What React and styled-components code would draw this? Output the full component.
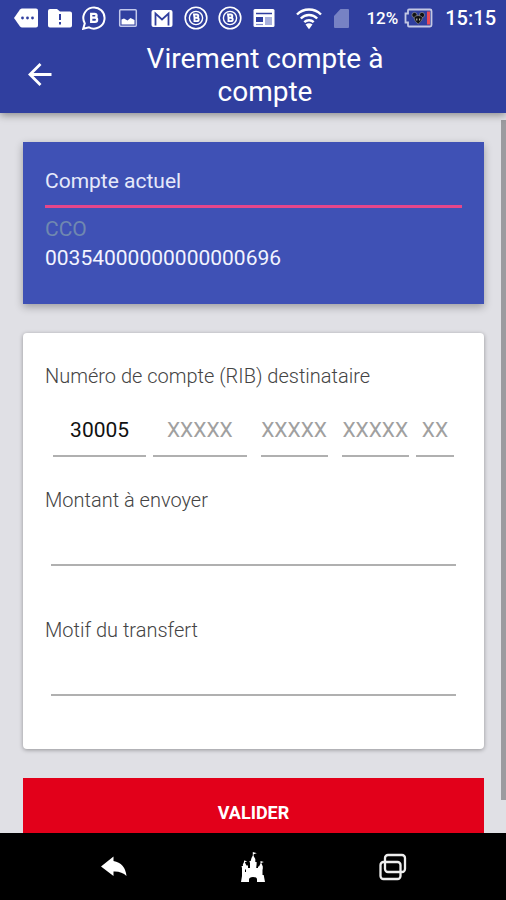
import React, { useState } from "react";
import styled, { createGlobalStyle } from "styled-components";

const GlobalStyle = createGlobalStyle`
  * {
    box-sizing: border-box;
  }
  body {
    margin: 0;
    font-family: Roboto, "Liberation Sans", sans-serif;
  }
`;

const MessageIcon = () => (
  <svg width="24" height="24" viewBox="0 0 24 24">
    <path d="M8 2.500h14q2 0 2 2v15q0 2-2 2H8q-1 0-2-1L0 12l6-8.500q1-1 2-1z" fill="#fff" />
    <g fill="#303f9f">
      <circle cx="8.5" cy="12" r="1.4" />
      <circle cx="13.5" cy="12" r="1.4" />
      <circle cx="18.5" cy="12" r="1.4" />
    </g>
  </svg>
);

const FolderAlertIcon = () => (
  <svg width="24" height="24" viewBox="0 0 24 24">
    <path d="M2 3h7l3 2.500h10q2 0 2 2v12q0 2-2 2H2q-2 0-2-2V5q0-2 2-2z" fill="#fff" />
    <path d="M12 8v6M12 16v2.4" stroke="#303f9f" strokeWidth="2" />
  </svg>
);

const BusinessChatIcon = () => (
  <svg width="24" height="24" viewBox="0 0 24 24" fill="none" stroke="#fff">
    <path d="M1.2 22.8l1.6-5.4A10.6 10.6 0 1 1 7 21.4z" strokeWidth="2" />
    <path
      d="M9.2 7.8h3.4a1.900 1.900 0 0 1 0 3.900H9.2zM9.2 11.7h3.800a2.100 2.100 0 0 1 0 4.200H9.2z"
      strokeWidth="2.300"
    />
  </svg>
);

const PhotoIcon = () => (
  <svg width="24" height="24" viewBox="0 0 24 24">
    <rect x="3.7" y="3.7" width="16.6" height="16.6" rx="1" fill="none" stroke="#c3c9ec" strokeWidth="1.5" />
    <path d="M5.500 18.500v-5l2.500-1 3.500 2 3-2.500 4 2v4.500z" fill="#fff" />
  </svg>
);

const MailIcon = () => (
  <svg width="24" height="24" viewBox="0 0 24 24">
    <rect x="1.500" y="4" width="21" height="17" rx="2" fill="#fff" />
    <path d="M5.500 19.500V7.500l6.500 6 6.500-6v12" fill="none" stroke="#303f9f" strokeWidth="1.800" />
  </svg>
);

const CoinIcon = () => (
  <svg width="24" height="24" viewBox="0 0 24 24" fill="none" stroke="#fff">
    <circle cx="12" cy="12" r="10.800" strokeWidth="1.600" />
    <circle cx="12" cy="12" r="6.600" strokeWidth="1.400" />
    <path d="M10 8.500h2.700a1.500 1.500 0 0 1 0 3.200H10.500zM10.500 11.700h2.500a1.700 1.700 0 0 1 0 3.400H10.500z" strokeWidth="1.900" />
  </svg>
);

const NewsIcon = () => (
  <svg width="24" height="24" viewBox="0 0 24 24">
    <rect x="1.500" y="3" width="21" height="18" rx="1.500" fill="#fff" />
    <path d="M4 7.500h16" stroke="#303f9f" strokeWidth="1.500" />
    <path d="M4 11h7v5H4z" fill="#303f9f" />
    <path d="M13 11h7v8h-7z" fill="#aab2dd" />
    <path d="M4 18.500h7" stroke="#7f8acb" strokeWidth="1.200" />
  </svg>
);

const WifiIcon = () => (
  <svg width="26" height="24" viewBox="0 0 26 24" fill="none" stroke="#fff" strokeWidth="2.400">
    <path d="M1 8.500a17 17 0 0 1 24 0" />
    <path d="M4.800 12.500a11.500 11.500 0 0 1 16.400 0" />
    <path d="M8.300 16.200a6.700 6.700 0 0 1 9.400 0" />
    <path d="M9.500 18.500q3.500-2.400 7 0L13 23.300z" fill="#fff" stroke="none" />
  </svg>
);

const SimIcon = () => (
  <svg width="16" height="24" viewBox="0 0 16 24">
    <path d="M6.500 3H14q1 0 1 1v17q0 1-1 1H1q-1 0-1-1V10z" fill="#7782c4" />
  </svg>
);

const BatteryIcon = () => (
  <svg width="30" height="24" viewBox="0 0 30 24">
    <path
      d="M6 3.500h21q1.500 0 1.500 1.500v14q0 1.500-1.500 1.500H6q-1 0-1-1v-3H2.500v-9H5v-3q0-1 1-1z"
      fill="none"
      stroke="#c3c8e4"
      strokeWidth="1.800"
    />
    <path d="M24 5.500h3v13h-3z" fill="#e84a56" />
    <g fill="#111" stroke="#8f8f96" strokeWidth=".7">
      <circle cx="11.500" cy="9" r="2.600" />
      <circle cx="19" cy="9" r="2.600" />
      <path d="M11 11.500q1.500-2 4.200-2t4.300 2q0 3.500-4.300 6.500-4.200-3-4.200-6.500z" />
    </g>
    <path d="M13.800 12.500v2M16.700 12.500v2" stroke="#d8d3c4" />
  </svg>
);

const ArrowIcon = () => (
  <svg width="32" height="32" viewBox="0 0 32 32" fill="none" stroke="#fff" strokeWidth="2.800">
    <path d="M27.500 15.500H6M16.500 5L6 15.500 16.500 26" />
  </svg>
);

const ReplyIcon = () => (
  <svg width="28" height="24" viewBox="0 0 28 24" fill="#fff">
    <path d="M2 11.500L14.500 1.500v4.500Q26 8 27.500 21q-5-5-13-4.500V21z" />
  </svg>
);

const CastleIcon = () => (
  <svg width="26" height="32" viewBox="0 0 26 32" fill="#fff">
    <path d="M1 31l1-6V17l-.5-2H3l-.2-1.500 1.200-2.500V9.500l3.200.8-2.400 1 1.700 3.200H8V17h2v-5l-.6-2h1.300l.8-3 1.300-2.500V1l4 1.200-3.200 1V5l1.700 3v3h1.300v2l-.4 4H18v-1.500h1l1.500-3V10l3.400 1-2.600 1 1.500 3.500v2L22.500 19v5h1.200l1.300 7h-8v-2.500q0-2.500-4-2.500t-4 2.500V31z" />
    <path d="M5.500 18.500v2.500" stroke="#000" />
  </svg>
);

const RecentsIcon = () => (
  <svg width="28" height="28" viewBox="0 0 28 28" fill="none" stroke="#eee" strokeWidth="2.300">
    <rect x="6" y="2" width="20" height="17" rx="3" />
    <rect x="1.500" y="9" width="20" height="17" rx="3" />
  </svg>
);

const ribFields = [
  { name: "banque", label: "Code banque", mask: "XXXXX" },
  { name: "agence", label: "Code agence", mask: "XXXXX" },
  { name: "compte1", label: "Compte, début", mask: "XXXXX", inset: true },
  { name: "compte2", label: "Compte, fin", mask: "XXXXX" },
  { name: "cle", label: "Clé RIB", mask: "XX" },
];

const App = () => {
  const [rib, setRib] = useState({ banque: "30005", agence: "", compte1: "", compte2: "", cle: "" });
  const [montant, setMontant] = useState("");
  const [motif, setMotif] = useState("");

  const handleRibChange = (e) => {
    setRib({ ...rib, [e.target.name]: e.target.value });
  };

  const handleSubmit = (e) => {
    e.preventDefault();
  };

  return (
    <Screen>
      <GlobalStyle />
      <TopBar>
        <StatusBar>
          <Notifications>
            <MessageIcon />
            <FolderAlertIcon />
            <BusinessChatIcon />
            <PhotoIcon />
            <MailIcon />
            <CoinIcon />
            <CoinIcon />
            <NewsIcon />
          </Notifications>
          <SystemStatus>
            <WifiIcon />
            <SimIcon />
            <Battery>
              <span>12%</span>
              <BatteryIcon />
            </Battery>
            <Clock>15:15</Clock>
          </SystemStatus>
        </StatusBar>
        <Header>
          <BackButton type="button" aria-label="Retour">
            <ArrowIcon />
          </BackButton>
          <Title>Virement compte à compte</Title>
        </Header>
      </TopBar>
      <Content>
        <AccountCard>
          <AccountTitle>Compte actuel</AccountTitle>
          <AccountType>CCO</AccountType>
          <AccountNumber>00354000000000000696</AccountNumber>
        </AccountCard>
        <Form onSubmit={handleSubmit}>
          <FormCard>
            <RibGroup>
              <Legend>Numéro de compte (RIB) destinataire</Legend>
              <RibRow>
                {ribFields.map((field) => (
                  <RibInput
                    key={field.name}
                    type="text"
                    name={field.name}
                    aria-label={field.label}
                    placeholder={field.mask}
                    maxLength={field.mask.length}
                    value={rib[field.name]}
                    onChange={handleRibChange}
                    $inset={field.inset}
                  />
                ))}
              </RibRow>
            </RibGroup>
            <Field>
              <Label htmlFor="montant">Montant à envoyer</Label>
              <TextInput id="montant" type="text" value={montant} onChange={(e) => setMontant(e.target.value)} />
            </Field>
            <Field>
              <Label htmlFor="motif">Motif du transfert</Label>
              <TextInput id="motif" type="text" value={motif} onChange={(e) => setMotif(e.target.value)} />
            </Field>
          </FormCard>
          <SubmitButton type="submit">VALIDER</SubmitButton>
        </Form>
        <ScrollThumb />
      </Content>
      <NavBar>
        <NavButton type="button" aria-label="Précédent">
          <ReplyIcon />
        </NavButton>
        <NavButton type="button" aria-label="Accueil">
          <CastleIcon />
        </NavButton>
        <NavButton type="button" aria-label="Applications récentes">
          <RecentsIcon />
        </NavButton>
      </NavBar>
    </Screen>
  );
};

const Screen = styled.div`
  display: flex;
  flex-direction: column;
  height: 100vh;
  background: #e0e0e5;
`;

const TopBar = styled.div`
  position: relative;
  z-index: 1;
  flex: none;
  background: #303f9f;
  color: #fff;
  box-shadow: 0 2px 8px rgba(0, 0, 0, 0.4);
`;

const StatusBar = styled.div`
  display: flex;
  align-items: center;
  justify-content: space-between;
  height: 35px;
  padding: 0 10px 0 14px;
`;

const Notifications = styled.div`
  display: flex;
  gap: 10px;
`;

const SystemStatus = styled.div`
  display: flex;
  align-items: center;
  gap: 12px;
`;

const Battery = styled.div`
  display: flex;
  align-items: center;
  gap: 5px;
  margin-left: 4px;
  font-size: 17px;
  font-weight: 500;
`;

const Clock = styled.time`
  font-size: 20px;
  font-weight: 500;
`;

const Header = styled.header`
  display: flex;
  align-items: center;
  padding: 7px 32px 5px 24px;
`;

const BackButton = styled.button`
  display: flex;
  padding: 0;
  border: none;
  background: none;
  color: #fff;
  cursor: pointer;
`;

const Title = styled.h1`
  max-width: 280px;
  margin: 0 auto;
  font-size: 28px;
  font-weight: 400;
  line-height: 33px;
  text-align: center;
`;

const Content = styled.main`
  position: relative;
  flex: 1;
  min-height: 0;
  overflow: hidden;
  padding: 29px 22px 0 23px;
`;

const AccountCard = styled.section`
  padding: 23px 22px 31px;
  background: #3f51b5;
  color: #fff;
  font-size: 21px;
  line-height: 29px;
  box-shadow: 0 3px 8px rgba(0, 0, 0, 0.3);
`;

const AccountTitle = styled.h2`
  margin: 0 0 7px;
  padding-bottom: 8px;
  border-bottom: 3px solid #e5468a;
  color: #e6e9fa;
  font-size: 21px;
  font-weight: 400;
  line-height: 32px;
`;

const AccountType = styled.div`
  color: #7088b0;
`;

const AccountNumber = styled.div`
  color: #f2f4ff;
`;

const Form = styled.form`
  display: flex;
  flex-direction: column;
  gap: 29px;
  margin-top: 29px;
`;

const FormCard = styled.div`
  padding: 28px 22px 53px;
  border-radius: 4px;
  background: #fff;
  box-shadow: 0 1px 4px rgba(0, 0, 0, 0.35);
`;

const RibGroup = styled.fieldset`
  margin: 0 0 28px;
  padding: 0;
  border: none;
`;

const Legend = styled.legend`
  padding: 0;
  color: #444;
  font-size: 20px;
  font-weight: 300;
  line-height: 30px;
`;

const RibRow = styled.div`
  display: grid;
  grid-template-columns: 93fr 93fr 81fr 67fr 38fr;
  gap: 7px;
  padding: 14px 8px 0;
`;

const Input = styled.input`
  width: 100%;
  min-width: 0;
  padding: 0;
  border: none;
  border-bottom: 2px solid #b0b0b0;
  border-radius: 0;
  background: none;
  color: #111;
  font-family: inherit;
  font-size: 21px;
  outline: none;
`;

const RibInput = styled(Input)`
  width: auto;
  height: 52px;
  margin: 0 ${(props) => (props.$inset ? "7px" : "0")};
  text-align: center;

  &::placeholder {
    color: #a0a0a0;
    opacity: 1;
  }
`;

const Field = styled.div`
  & + & {
    margin-top: 49px;
  }
`;

const Label = styled.label`
  display: block;
  color: #444;
  font-size: 20px;
  font-weight: 300;
  line-height: 30px;
`;

const TextInput = styled(Input)`
  display: block;
  width: auto;
  min-width: calc(100% - 12px);
  height: 51px;
  margin: 0 6px;
`;

const SubmitButton = styled.button`
  height: 68px;
  border: none;
  background: #e2001a;
  color: #fff;
  font-family: inherit;
  font-size: 18px;
  font-weight: 700;
  cursor: pointer;
`;

const ScrollThumb = styled.div`
  position: absolute;
  top: 7px;
  right: 0;
  bottom: 33px;
  width: 5px;
  background: #9b9b9f;
`;

const NavBar = styled.nav`
  display: flex;
  flex: none;
  justify-content: center;
  height: 67px;
  background: #000;
`;

const NavButton = styled.button`
  display: flex;
  align-items: center;
  justify-content: center;
  width: 140px;
  padding: 0;
  border: none;
  background: none;
  color: #fff;
  cursor: pointer;
`;

export default App;
